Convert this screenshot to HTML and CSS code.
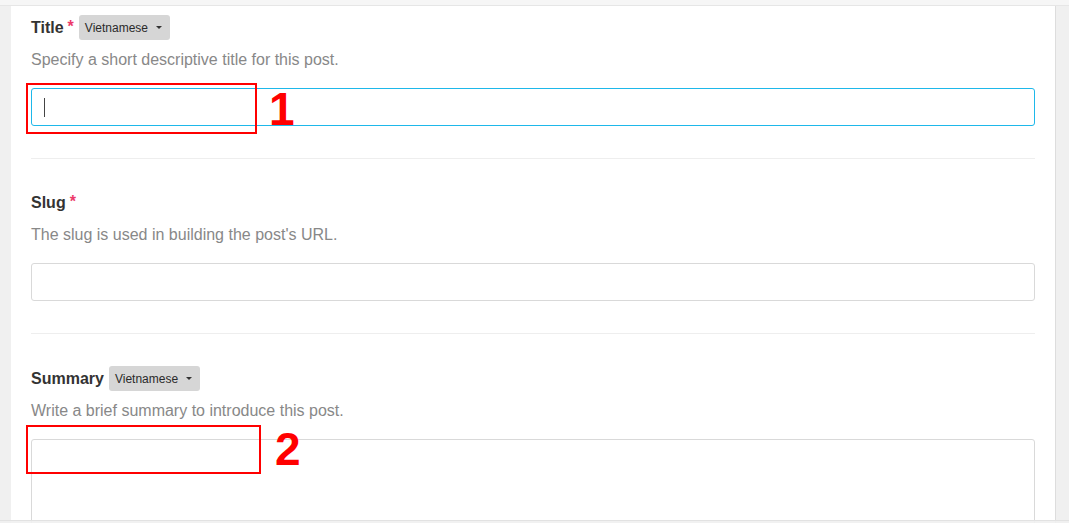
FILE: index.html
```html
<!DOCTYPE html>
<html lang="en">
<head>
  <meta charset="UTF-8">
  <meta name="viewport" content="width=device-width, initial-scale=1.0">
  <title>Edit post</title>
  <link rel="stylesheet" href="styles.css">
</head>
<body>
  <div class="top-shade"></div>
  <main class="editor-card">

    <div class="field">
      <div class="field-label">
        <span class="label-text">Title</span>
        <span class="required">*</span>
        <button class="lang-badge">Vietnamese <span class="caret"></span></button>
      </div>
      <p class="field-help">Specify a short descriptive title for this post.</p>
      <div class="text-input is-focused"><span class="text-cursor"></span></div>
      <div class="mark-box mark-title"></div>
      <span class="mark-number num-title">1</span>
    </div>

    <div class="field">
      <div class="field-label">
        <span class="label-text">Slug</span>
        <span class="required">*</span>
      </div>
      <p class="field-help">The slug is used in building the post's URL.</p>
      <div class="text-input"></div>
    </div>

    <div class="field">
      <div class="field-label">
        <span class="label-text">Summary</span>
        <button class="lang-badge">Vietnamese <span class="caret"></span></button>
      </div>
      <p class="field-help">Write a brief summary to introduce this post.</p>
      <div class="text-area"></div>
      <div class="mark-box mark-summary"></div>
      <span class="mark-number num-summary">2</span>
    </div>

  </main>
  <div class="bottom-shade"></div>
</body>
</html>
```

FILE: styles.css
```css
:root {
  --page-bg: #f0f0f0;
  --text-dark: #333333;
  --text-muted: #888888;
  --border-light: #d9d9d9;
  --focus-color: #1eb8ea;
  --mark-red: #ff0000;
}

* {
  margin: 0;
  padding: 0;
  box-sizing: border-box;
}

body {
  background: var(--page-bg);
  font-family: "Liberation Sans", Arial, sans-serif;
  color: var(--text-dark);
  height: 523px;
  overflow: hidden;
}

.top-shade {
  position: fixed;
  top: 0;
  left: 0;
  right: 0;
  height: 6px;
  background: #f6f6f6;
  border-bottom: 1px solid #e6e6e6;
  z-index: 10;
}

.bottom-shade {
  position: fixed;
  left: 0;
  right: 0;
  bottom: 0;
  height: 3px;
  background: rgba(240, 240, 240, 0.9);
  border-top: 1px solid rgba(225, 225, 225, 0.9);
  z-index: 10;
}

.editor-card {
  margin: 6px 13px 0 11px;
  padding: 9px 20px 0 20px;
  background: #ffffff;
  border-right: 1px solid #dddddd;
  min-height: 600px;
}

.field {
  position: relative;
  padding: 31px 0 32px;
  border-bottom: 1px solid #eeeeee;
}

.field:first-child {
  padding-top: 0;
}

.field:last-child {
  padding-top: 32px;
  border-bottom: none;
}

.field-label {
  display: flex;
  align-items: center;
  height: 25px;
}

.label-text {
  font-size: 16px;
  font-weight: 700;
}

.required {
  color: #ec3a6a;
  font-size: 16px;
  font-weight: 700;
  margin-left: 4px;
  margin-top: -2px;
}

.lang-badge {
  display: flex;
  align-items: center;
  gap: 8px;
  height: 25px;
  margin-left: 5px;
  padding: 0 8px 0 6px;
  background: #d6d6d6;
  border: none;
  border-radius: 3px;
  font-family: inherit;
  font-size: 12px;
  color: #2a2a2a;
}

.caret {
  width: 0;
  height: 0;
  border-left: 3px solid transparent;
  border-right: 3px solid transparent;
  border-top: 3px solid #333;
}

.field-help {
  margin-top: 9px;
  font-size: 16px;
  line-height: 21px;
  color: var(--text-muted);
}

.text-input {
  display: flex;
  align-items: center;
  height: 38px;
  margin-top: 18px;
  padding: 0 12px;
  border: 1px solid var(--border-light);
  border-radius: 3px;
}

.text-input.is-focused {
  border-color: var(--focus-color);
}

.text-cursor {
  width: 1px;
  height: 19px;
  background: #444;
}

.text-area {
  height: 140px;
  margin-top: 18px;
  border: 1px solid var(--border-light);
  border-radius: 3px;
}

/* red annotation overlays */
.mark-box {
  position: absolute;
  border: 2px solid var(--mark-red);
}

.mark-title {
  left: -5px;
  top: 68px;
  width: 231px;
  height: 51px;
}

.mark-summary {
  left: -5px;
  top: 91px;
  width: 235px;
  height: 49px;
}

.mark-number {
  position: absolute;
  color: var(--mark-red);
  font-size: 46px;
  font-weight: 700;
  line-height: 1;
}

.num-title {
  left: 238px;
  top: 71px;
}

.num-summary {
  left: 244px;
  top: 92px;
}
```
